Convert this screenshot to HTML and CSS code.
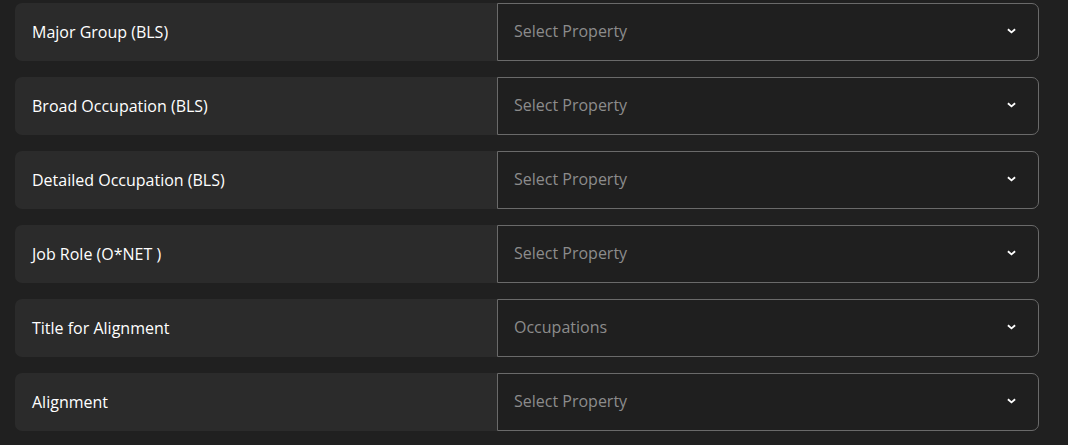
FILE: index.html
```html
<!DOCTYPE html>
<html lang="en">
<head>
<meta charset="utf-8">
<title>Properties</title>
<link rel="stylesheet" href="styles.css">
</head>
<body>
<div class="list">
  <div class="row"><div class="label">Major Group (BLS)</div><div class="select"><span class="ph">Select Property</span><svg class="chev" viewBox="0 0 10 6" width="9" height="6"><path d="M1 1l4 3.5L9 1" fill="none" stroke="#fff" stroke-width="2"/></svg></div></div>
  <div class="row"><div class="label">Broad Occupation (BLS)</div><div class="select"><span class="ph">Select Property</span><svg class="chev" viewBox="0 0 10 6" width="9" height="6"><path d="M1 1l4 3.5L9 1" fill="none" stroke="#fff" stroke-width="2"/></svg></div></div>
  <div class="row"><div class="label">Detailed Occupation (BLS)</div><div class="select"><span class="ph">Select Property</span><svg class="chev" viewBox="0 0 10 6" width="9" height="6"><path d="M1 1l4 3.5L9 1" fill="none" stroke="#fff" stroke-width="2"/></svg></div></div>
  <div class="row"><div class="label">Job Role (O*NET )</div><div class="select"><span class="ph">Select Property</span><svg class="chev" viewBox="0 0 10 6" width="9" height="6"><path d="M1 1l4 3.5L9 1" fill="none" stroke="#fff" stroke-width="2"/></svg></div></div>
  <div class="row"><div class="label">Title for Alignment</div><div class="select"><span class="ph">Occupations</span><svg class="chev" viewBox="0 0 10 6" width="9" height="6"><path d="M1 1l4 3.5L9 1" fill="none" stroke="#fff" stroke-width="2"/></svg></div></div>
  <div class="row"><div class="label">Alignment</div><div class="select"><span class="ph">Select Property</span><svg class="chev" viewBox="0 0 10 6" width="9" height="6"><path d="M1 1l4 3.5L9 1" fill="none" stroke="#fff" stroke-width="2"/></svg></div></div>
</div>
</body>
</html>
```
FILE: styles.css
```css
html, body {
  margin: 0;
  background: #202020;
}
body {
  font-family: "Open Sans", "Liberation Sans", sans-serif;
  font-size: 16px;
  line-height: 22px;
}
.list {
  padding: 3px 0 0 15px;
  display: flex;
  flex-direction: column;
  gap: 16px;
  width: 1024px;
}
.row {
  display: flex;
  align-items: flex-start;
  height: 58px;
}
.label {
  flex: 0 0 482px;
  height: 58px;
  padding: 0 0 1px 17px;
  box-sizing: border-box;
  display: flex;
  align-items: center;
  background: #2b2b2b;
  border-radius: 7px 0 0 7px;
  color: #ffffff;
}
.select {
  flex: 1;
  height: 56px;
  box-sizing: content-box;
  border: 1px solid #6a6a6a;
  border-radius: 0 7px 7px 0;
  background: #1f1f1f;
  display: flex;
  align-items: center;
  justify-content: space-between;
  padding: 0 22px 0 16px;
}
.ph {
  color: #8c8c8c;
  margin-top: -3px;
}
.chev {
  display: block;
  margin-top: -2px;
}
```
